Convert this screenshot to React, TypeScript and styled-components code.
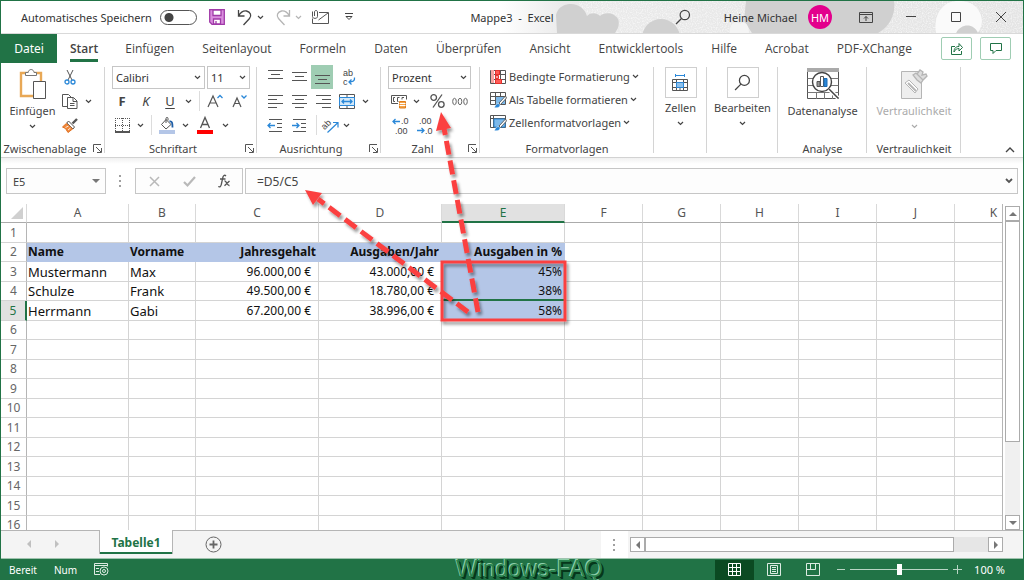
import React from "react";
import styled, { createGlobalStyle, css } from "styled-components";

const green = "#217346";
const line = "#d4d4d4";
const ink = "#444444";
const blue = "#2b88d8";
const uiFont = '"Noto Sans", "Open Sans", sans-serif';

const GlobalStyle = createGlobalStyle`
  * { box-sizing: border-box; }
  html, body, #root { height: 100%; }
  body { margin: 0; overflow: hidden; font-family: ${uiFont}; font-size: 11px; color: ${ink}; background: #fff; }
  button, input, select { font: inherit; color: inherit; }
  svg { display: block; flex: none; }
`;

const Window = styled.div`
  position: relative;
  display: flex;
  flex-direction: column;
  height: 100%;
  border: solid ${green};
  border-width: 1px 1px 0;
  background: #fff;
`;

/* ---------- title bar ---------- */

const TitleBar = styled.header`
  position: relative;
  display: grid;
  grid-template-columns: 1fr auto 1fr;
  align-items: center;
  height: 33px;
  border-bottom: 1px solid #d9d9d9;
  flex: none;
  color: #333;
`;
const Clouds = styled.svg`
  position: absolute;
  top: 0;
  right: 0;
`;
const TitleLeft = styled.div`
  display: flex;
  align-items: center;
  padding-left: 20px;
`;
const TitleRight = styled.div`
  position: relative;
  display: flex;
  align-items: center;
  justify-content: flex-end;
`;
const DocTitle = styled.h1`
  position: relative;
  margin: 0;
  font-size: 11px;
  font-weight: 400;
  white-space: pre;
`;
const SwitchLabel = styled.label`
  display: flex;
  align-items: center;
  gap: 8px;
  margin-right: 11px;
  white-space: nowrap;
`;
const Switch = styled.input`
  appearance: none;
  width: 37px;
  height: 15px;
  margin: 0;
  border: 1px solid #555;
  border-radius: 8px;
  background: radial-gradient(circle at 8px 50%, #444 4px, transparent 5px) #fff;
`;
const IconButton = styled.button<{ $w?: number; $h?: number; $on?: boolean; $gap?: number }>`
  display: flex;
  align-items: center;
  justify-content: center;
  width: ${(p) => p.$w ?? 24}px;
  height: ${(p) => p.$h ?? 24}px;
  margin: 0 0 0 ${(p) => p.$gap ?? 0}px;
  padding: 0;
  border: 0;
  background: ${(p) => (p.$on ? "#9fcdb3" : "transparent")};
  flex: none;
`;
const UserName = styled.span`
  margin: 0 11px 0 24px;
  white-space: nowrap;
`;
const Avatar = styled.span`
  display: flex;
  align-items: center;
  justify-content: center;
  width: 24px;
  height: 24px;
  margin-right: 11px;
  border-radius: 50%;
  background: #e3008c;
  color: #fff;
  font-size: 11px;
`;

/* ---------- ribbon tabs ---------- */

const TabBar = styled.nav`
  display: flex;
  align-items: center;
  height: 29px;
  padding-right: 12px;
  flex: none;
`;
const FileTab = styled.button`
  width: 56px;
  height: 29px;
  padding: 0;
  border: 0;
  background: ${green};
  color: #fff;
  font-size: 12px;
`;
const Tab = styled.button<{ $active?: boolean }>`
  height: 29px;
  padding: 0 ${(p) => (p.$active ? 13 : 14)}px;
  border: 0;
  background: ${(p) =>
    p.$active
      ? `linear-gradient(${green}, ${green}) center 25px / calc(100% - 26px) 3px no-repeat`
      : "transparent"};
  font-family: "Open Sans", "Noto Sans", sans-serif;
  font-size: 12px;
  font-weight: ${(p) => (p.$active ? 600 : 400)};
  white-space: nowrap;
`;
const Spacer = styled.span`
  flex: 1;
`;
const OutlineButton = styled.button`
  display: flex;
  align-items: center;
  justify-content: center;
  width: 31px;
  height: 23px;
  padding: 0;
  margin-left: 8px;
  border: 1px solid #9fcdb3;
  border-radius: 2px;
  background: #fff;
  flex: none;
`;

/* ---------- ribbon ---------- */

const Ribbon = styled.section`
  display: flex;
  height: 95px;
  padding: 2px 0 0;
  border-bottom: 1px solid #d2d2d2;
  flex: none;
`;
const Group = styled.div<{ $w: number }>`
  display: flex;
  flex-direction: column;
  width: ${(p) => p.$w}px;
  flex: none;
  background: linear-gradient(${line}, ${line}) right 2px / 1px 86px no-repeat;
`;
const GroupBody = styled.div<{ $pad?: number; $center?: boolean }>`
  display: flex;
  height: 75px;
  padding-left: ${(p) => p.$pad ?? 0}px;
  justify-content: ${(p) => (p.$center ? "center" : "flex-start")};
`;
const GroupFoot = styled.div<{ $launch?: boolean }>`
  display: grid;
  grid-template-columns: 1fr ${(p) => (p.$launch ? "16px" : "0")};
  align-items: center;
  height: 16px;
  text-align: center;
  white-space: nowrap;
`;
const Rows = styled.div`
  display: flex;
  flex-direction: column;
`;
const Row = styled.div<{ $gap?: number }>`
  display: flex;
  align-items: center;
  gap: ${(p) => p.$gap ?? 0}px;
  height: 24px;
`;
const Divider = styled.span`
  width: 1px;
  height: 20px;
  margin: 0 3px 0 5px;
  background: #dcdcdc;
`;
const BigButton = styled.button<{ $w: number }>`
  display: flex;
  flex-direction: column;
  align-items: center;
  width: ${(p) => p.$w}px;
  height: 74px;
  padding: 2px 0 0;
  border: 0;
  background: transparent;
  white-space: nowrap;
  &:disabled { color: #ababab; }
`;
const BigIcon = styled.span<{ $boxed?: boolean }>`
  display: flex;
  align-items: center;
  justify-content: center;
  width: 32px;
  height: ${(p) => (p.$boxed ? 31 : 34)}px;
  border: ${(p) => (p.$boxed ? "1px solid #cfcfcf" : "0")};
`;
const BigText = styled.span`
  height: 23px;
  line-height: 20px;
`;
const LineButton = styled.button`
  display: flex;
  align-items: center;
  gap: 2px;
  height: 23px;
  padding: 0;
  border: 0;
  background: transparent;
  white-space: nowrap;
`;
const Letter = styled.span<{ $kind: "b" | "i" | "u" }>`
  line-height: 16px;
  font-size: 13px;
  ${(p) => p.$kind === "b" && css`font-weight: 700;`}
  ${(p) => p.$kind === "i" && css`font-style: italic;`}
  ${(p) => p.$kind === "u" && css`text-decoration: underline; text-underline-offset: 2px;`}
`;
const SelectBox = styled.span<{ $w: number }>`
  display: grid;
  grid-template-columns: 1fr 10px;
  align-items: center;
  width: ${(p) => p.$w}px;
  height: 23px;
  border: 1px solid #c6c6c6;
  flex: none;
  background: #fff;
`;
const Select = styled.select`
  appearance: none;
  grid-area: 1 / 1 / 2 / 3;
  width: 100%;
  height: 21px;
  padding: 0 0 0 3px;
  border: 0;
  background: transparent;
  color: #333;
`;
const SelectMark = styled.span`
  grid-area: 1 / 2;
  pointer-events: none;
`;
const Collapse = styled.div`
  display: flex;
  flex: 1;
  align-items: flex-end;
  justify-content: flex-end;
`;

/* ---------- formula bar ---------- */

const FormulaBar = styled.div`
  display: flex;
  height: 46px;
  padding: 10px 5px 10px 5px;
  background: linear-gradient(#f0f0f0, #fff 6px);
  flex: none;
`;
const NameBox = styled.div`
  display: flex;
  align-items: center;
  width: 100px;
  height: 26px;
  border: 1px solid #c6c6c6;
  background: #fdfdfd;
`;
const BareInput = styled.input<{ $size?: number }>`
  flex: 1;
  min-width: 0;
  height: 24px;
  padding: 0 0 0 6px;
  border: 0;
  background: transparent;
  font-size: ${(p) => p.$size ?? 11}px;
`;
const Grip = styled.span`
  display: flex;
  align-items: center;
  justify-content: center;
  width: 29px;
`;
const FxBox = styled.div`
  display: flex;
  align-items: center;
  width: 108px;
  height: 26px;
  margin-right: 2px;
  border: 1px solid #c6c6c6;
  background: #fdfdfd;
`;
const FormulaBox = styled.div`
  display: flex;
  flex: 1;
  align-items: center;
  height: 26px;
  padding-left: 5px;
  border: 1px solid #c6c6c6;
  background: #fdfdfd;
`;

/* ---------- sheet ---------- */

const SheetArea = styled.main`
  display: flex;
  flex: 1;
  min-height: 0;
`;
const SheetClip = styled.div`
  flex: 1;
  min-width: 0;
  overflow: hidden;
  border-right: 1px solid #b5b5b5;
`;
const Sheet = styled.table`
  width: 100%;
  min-width: 1032px;
  border-collapse: separate;
  border-spacing: 0;
  table-layout: fixed;
  font-size: 13px;
  color: #111;
`;
const ColWidth = styled.col<{ $w?: number }>`
  width: ${(p) => (p.$w ? `${p.$w}px` : "auto")};
`;
const ColHead = styled.th<{ $on?: boolean }>`
  height: 19px;
  padding: 0;
  border-right: 1px solid #d9d9d9;
  border-bottom: ${(p) => (p.$on ? `2px solid ${green}` : "1px solid #ababab")};
  background: ${(p) => (p.$on ? "#e1e1e1" : "#fff")};
  color: ${(p) => (p.$on ? green : "#555")};
  font-size: 12px;
  font-weight: 400;
  line-height: 16px;
`;
const SheetRow = styled.tr`
  height: 19px;
  &:nth-child(odd) { height: 20px; }
`;
const RowHead = styled.th<{ $on?: boolean }>`
  padding: 0;
  border-right: ${(p) => (p.$on ? `2px solid ${green}` : "1px solid #b5b5b5")};
  border-bottom: 1px solid ${line};
  background: ${(p) => (p.$on ? "#e1e1e1" : "#fff")};
  color: ${(p) => (p.$on ? green : "#666")};
  font-size: 12px;
  font-weight: 400;
  line-height: 16px;
`;
const Cell = styled.td<{ $right?: boolean; $bold?: boolean; $fill?: boolean; $money?: boolean; $above?: boolean }>`
  padding: 0 ${(p) => (p.$money ? 7 : 2)}px 0 1px;
  border-right: 1px solid ${(p) => (p.$fill ? "#b4c6e7" : line)};
  border-bottom: ${(p) => (p.$above ? `2px solid ${green}` : `1px solid ${p.$fill ? "#b4c6e7" : line}`)};
  background: ${(p) => (p.$fill ? "#b4c6e7" : "#fff")};
  text-align: ${(p) => (p.$right ? "right" : "left")};
  font-size: ${(p) => (p.$right || p.$bold ? 12 : 13)}px;
  font-weight: ${(p) => (p.$bold ? 700 : 400)};
  line-height: 16px;
  white-space: nowrap;
`;
const VScroll = styled.div`
  display: flex;
  flex-direction: column;
  width: 20px;
  padding: 2px 3px 0 2px;
`;
const VTrack = styled.div`
  flex: 1;
  background: #f0f0f0;
`;
const VThumb = styled.div`
  height: 75%;
  border: 1px solid #ababab;
  background: #fff;
`;
const ScrollButton = styled.button`
  display: flex;
  align-items: center;
  justify-content: center;
  width: 15px;
  height: 15px;
  padding: 0;
  border: 1px solid #ababab;
  background: #fff;
  flex: none;
`;

/* ---------- sheet tabs ---------- */

const SheetTabs = styled.div`
  display: flex;
  height: 29px;
  border-top: 1px solid #b5b5b5;
  border-bottom: 1px solid #9fc3ae;
  background: #f4f4f4;
  flex: none;
`;
const TabArrows = styled.div`
  display: flex;
  align-items: center;
  width: 98px;
  height: 26px;
  padding-left: 16px;
  gap: 4px;
`;
const SheetTab = styled.button`
  width: 74px;
  height: 24px;
  margin-top: -1px;
  padding: 0;
  border: 1px solid #b5b5b5;
  border-width: 0 1px 0;
  box-shadow: inset 0 -2px ${green};
  background: #fff;
  color: ${green};
  font-size: 12px;
  font-weight: 700;
`;
const HGrip = styled.span`
  display: flex;
  align-items: center;
  justify-content: center;
  width: 27px;
  background: #fff;
`;
const HScroll = styled.div`
  display: flex;
  width: 373px;
  margin: 6px 20px 0 2px;
`;
const HTrack = styled.div`
  flex: 1;
  height: 15px;
  background: #e6e6e6;
`;
const HThumb = styled.div`
  width: 90%;
  height: 15px;
  border: 1px solid #ababab;
  background: #fff;
`;

/* ---------- status bar ---------- */

const StatusBar = styled.footer`
  position: relative;
  display: flex;
  align-items: center;
  height: 21px;
  padding: 0 18px 0 8px;
  background: ${green};
  color: #fff;
  font-size: 10px;
  flex: none;
`;
const StatusText = styled.span`
  margin-right: 17px;
  white-space: nowrap;
`;
const ViewButtons = styled.div`
  display: flex;
  margin-right: 4px;
`;
const ViewButton = styled.button<{ $on?: boolean }>`
  display: flex;
  align-items: center;
  justify-content: center;
  width: 39px;
  height: 20px;
  padding: 0;
  border: 0;
  background: ${(p) => (p.$on ? "#0b4a22" : "transparent")};
`;
const ZoomRange = styled.input`
  appearance: none;
  width: 98px;
  height: 12px;
  margin: 0 4px;
  background: linear-gradient(#b9d5c5, #b9d5c5) center / 100% 1px no-repeat;
  &::-webkit-slider-thumb {
    appearance: none;
    width: 5px;
    height: 11px;
    background: #fff;
  }
`;
const ZoomButton = styled.button`
  width: 10px;
  height: 16px;
  padding: 0;
  border: 0;
  background: transparent;
  display: flex;
  align-items: center;
  justify-content: center;
`;
const ZoomValue = styled.span`
  margin-left: 12px;
  font-size: 11px;
`;
const Watermark = styled.span`
  position: absolute;
  left: 455px;
  bottom: -2px;
  height: 26px;
  line-height: 26px;
  font-family: "Liberation Sans", sans-serif;
  font-size: 23px;
  color: #2a8350;
  text-shadow: -1px -1px #8fd0ab, 1px 1px #06371b, 2px 2px #06371b;
`;
const Annotations = styled.svg`
  position: absolute;
  top: -1px;
  left: -1px;
  pointer-events: none;
`;

/* ---------- icons ---------- */

type SvgProps = { w: number; h?: number; children: React.ReactNode; stroke?: string; sw?: number };
const Ico = ({ w, h = w, children, stroke = ink, sw = 1 }: SvgProps) => (
  <svg width={w} height={h} viewBox={`0 0 ${w} ${h}`} overflow="visible" fill="none" stroke={stroke} strokeWidth={sw} aria-hidden="true">
    {children}
  </svg>
);
const IconText = styled.text`
  font-family: "Liberation Sans", sans-serif;
  font-size: 9px;
  fill: ${ink};
  stroke: none;
`;
const Chevron = ({ c = ink }: { c?: string }) => (
  <Ico w={7} h={5} stroke={c} sw={1.2}>
    <path d="M1 1l2.500 2.500L6 1" />
  </Ico>
);
const DropButton = ({ label, c }: { label: string; c?: string }) => (
  <IconButton $w={12} aria-label={label}><Chevron c={c} /></IconButton>
);
const Launcher = ({ label }: { label: string }) => (
  <IconButton $w={16} $h={16} aria-label={label}>
    <Ico w={9} stroke="#555">
      <path d="M.5 8V.5H8M3 3l5 5M8.500 4v4.500H4" />
    </Ico>
  </IconButton>
);
const Lines = ({ x, y = 1, step = 4 }: { x: [number, number][]; y?: number; step?: number }) => (
  <Ico w={15} h={14} stroke="#555">
    {x.map(([a, b], i) => <path key={i} d={`M${a} ${y + i * step + 0.5}H${b}`} />)}
  </Ico>
);
const Arrowhead = ({ d, c = "#777" }: { d: "l" | "r" | "u" | "d"; c?: string }) => (
  <Ico w={8} stroke="none">
    <path fill={c} d={{ l: "M6 0v8L2 4z", r: "M2 0v8l4-4z", u: "M0 6h8L4 2z", d: "M0 2h8L4 6z" }[d]} />
  </Ico>
);
const GripDots = () => (
  <Ico w={3} h={12} stroke="none">
    <path fill="#a0a0a0" d="M0 0h2v2H0zM0 5h2v2H0zM0 10h2v2H0z" />
  </Ico>
);
const Magnifier = ({ size = 16 }: { size?: number }) => (
  <svg width={size} height={size} viewBox="0 0 16 16" fill="none" stroke="#444" strokeWidth="1.200" aria-hidden="true">
    <circle cx="9.800" cy="6" r="4.700" /><path d="M6.500 9.500L1 15" />
  </svg>
);
const Brush = () => (
  <g>
    <path d="M15.500 5L9 12l1.500 1.500L16.500 7z" fill="#fff" stroke="#555" strokeWidth=".9" />
    <path d="M4 16.500c1.500-.5 1.300-3.800 4-4 1.800.2 2.500 1.800 1.600 3-1.200 1.400-3.600 1.500-5.600 1z" fill={blue} stroke="#fff" strokeWidth=".5" />
  </g>
);

const SaveIcon = () => (
  <Ico w={16} stroke="#a03aa8" sw={1.3}>
    <path fill="#da8ede" d="M.7.700h14.600v14.600H3L.7 13z" />
    <path fill="#fff" d="M4 1h8v5.500H4zM4.500 10h7v5h-7z" />
    <path d="M7 12v3" />
  </Ico>
);
const UndoIcon = ({ c = "#444", flip = false }: { c?: string; flip?: boolean }) => (
  <Ico w={16} h={17} stroke={c} sw={1.3}>
    <g transform={flip ? "translate(16 0) scale(-1 1)" : undefined}>
      <path d="M1.500 1v6h6M1.500 7c2-3.500 4.500-5.500 8-5 4 .8 5.500 4.500 3 7.500L6.500 16" />
    </g>
  </Ico>
);
const MailIcon = () => (
  <Ico w={17} h={14} stroke="#555">
    <path d="M7 2.500h9.500v11H.500V8.500M6.500 10L16 3" />
    <path d="M.500 1.500v5c0 2.500 5 2.500 5 0V2c0-2-3-2-3 0v4" />
  </Ico>
);

const PasteIcon = () => (
  <Ico w={28} h={32}>
    <path d="M2 5h20v23H2z" fill="#fff" stroke="#e8a856" strokeWidth="2.400" />
    <path d="M6.500 7.500V4.500h2.700c.3-4 5.500-4 5.800 0h2.500v3z" fill="#fff" stroke="#777" />
    <path d="M14.500 13.500h12v17h-12z" fill="#fff" stroke="#555" />
  </Ico>
);
const CutIcon = () => (
  <Ico w={12} h={15}>
    <path d="M3 0l5 10M9 0L4 10" stroke="#555" />
    <circle cx="3" cy="12" r="2" stroke={blue} strokeWidth="1.300" /><circle cx="9" cy="12" r="2" stroke={blue} strokeWidth="1.300" />
  </Ico>
);
const CopyIcon = () => (
  <Ico w={16} h={15} stroke="#555">
    <path d="M5 12.500H.500V.500h6l2.500 2.500" /><path d="M5.500 3.500h6l3.500 3.500v7.500H5.500zM11 4v3.500h4M8 9.500h4.500M8 11.500h4.500" fill="#fff" />
  </Ico>
);
const PainterIcon = () => (
  <Ico w={16} h={15}>
    <path d="M15 1l-4.500 4.500" strokeWidth="2.400" stroke="#555" />
    <path d="M6.500 3l6 6L11 11 4.800 5z" fill="#fff" stroke="#555" />
    <path d="M4.300 5.500L.500 9l3 1.500 2.500 4 4.500-3.500z" fill="#f0883c" stroke="#e07020" />
    <path d="M3.500 9.500l3-1.500M6 12l2.500-2" stroke="#fff" strokeWidth=".8" />
  </Ico>
);
const BorderIcon = () => (
  <Ico w={15} h={15} stroke="#555">
    <path d="M.5 0v13M7.500 0v13M14.500 0v13M0 .5h15M0 7.500h15" strokeDasharray="1 1" /><path d="M0 14h15" strokeWidth="2" />
  </Ico>
);
const FillIcon = () => (
  <Ico w={16} h={17}>
    <path d="M7 2.500l5 5-5 4.500-4.500-4.500zM7 6V1.500c0-1.500 2-1.500 2 0v2" stroke="#555" /><path d="M10.500 4.500c2.500-.5 3 1 3 6" stroke="#1f5fa8" strokeWidth="1.800" />
    <path d="M0 13h16v4H0z" fill="#b4c6e7" stroke="none" />
  </Ico>
);
const FontColorIcon = () => (
  <Ico w={16} h={17}>
    <path d="M3.500 11L8 .500 12.500 11M5 7.500h6" stroke="#555" strokeWidth="1.300" /><path d="M0 13h16v4H0z" fill="#f00" stroke="none" />
  </Ico>
);
const GrowIcon = ({ down = false }: { down?: boolean }) => (
  <Ico w={16} h={15}>
    <path d={down ? "M2 13L6 4l4 9M3.500 9.500h5" : "M1 13L6 2l5 11M2.800 9h6.400"} stroke="#555" strokeWidth="1.200" />
    <path d={down ? "M10.500 1.500L13 4l2.500-2.500" : "M10.500 4L13 1.500 15.500 4"} stroke={blue} strokeWidth="1.300" />
  </Ico>
);
const WrapIcon = () => (
  <Ico w={13} h={17}>
    <IconText x="1" y="7">ab</IconText><IconText x="1" y="16">c</IconText>
    <path d="M12.500 8.500c.5 3.500-1.500 4.500-5.500 4.500M9.500 10.500L7 13l2.500 2.500" stroke={blue} strokeWidth="1.300" />
  </Ico>
);
const MergeIcon = () => (
  <Ico w={16} h={15} stroke="#555">
    <path d="M.5 .5h15v14H.5zM8 .5v3M8 11.500v3" /><path d="M.5 3.500h15v8H.5z" fill="#d3e8f8" stroke={blue} />
    <path d="M3 7.500h10M5 5.500l-2 2 2 2M11 5.500l2 2-2 2" stroke={blue} strokeWidth="1.300" />
  </Ico>
);
const IndentIcon = ({ right = false }: { right?: boolean }) => (
  <Ico w={15} h={13} stroke="#555">
    <path d="M1 .5h13M9 4.500h5M9 8.500h5M1 12.500h13" />
    <path d={right ? "M0 6.500h7M4.500 4l2.500 2.500L4.500 9" : "M0 6.500h7M2.500 4L0 6.500 2.500 9"} stroke={blue} strokeWidth="1.300" />
  </Ico>
);
const RotateIcon = () => (
  <Ico w={17} h={17}>
    <IconText x="0" y="11" transform="rotate(-45 4 9)">ab</IconText>
    <path d="M5.500 15.500L15.500 6M11 5.500h5v5" stroke={blue} strokeWidth="1.200" />
  </Ico>
);
const MoneyIcon = () => (
  <Ico w={17} h={15} stroke="#555">
    <path d="M7 9.500H.500V1.500h15v4M4 3.500H2.500v4H4M8.500 3.500H6.500v4h1M13 3.500h-2v2" />
    <path d="M8.500 7.500h6v6.500h-6z" fill="#f4a44c" stroke="#e07f1a" /><path d="M8.500 9.500h6M8.500 11.500h6" stroke="#fff" />
  </Ico>
);
const DecimalIcon = ({ less = false }: { less?: boolean }) => (
  <Ico w={17} h={17}>
    <IconText x={less ? 3 : 9} y="7">{less ? ".00" : ".0"}</IconText>
    <IconText x={less ? 9 : 3} y="17">{less ? ".0" : ".00"}</IconText>
    <path d={less ? "M1 13.500h7M5.500 11L8 13.500 5.500 16" : "M8 4.500H1M3.500 2L1 4.500 3.500 7"} stroke={blue} strokeWidth="1.300" />
  </Ico>
);
const CondIcon = () => (
  <Ico w={17} h={16} stroke="#555">
    <path d="M.5 1.500h15v13H.5zM5.500 1v14M10.500 1v14M0 5.500h16M0 10.500h16" />
    <path d="M1 1h3v13H1z" fill="#f6a5a3" stroke="none" /><path d="M5.500 1.500h4v4h-4zM5.500 10.500h6v4h-6z" fill="#ff5c57" stroke="#e8312c" /><path d="M5.500 6.500h3v3h-3z" fill="#f6a5a3" stroke="#e8312c" />
  </Ico>
);
const TableIcon = ({ plain = false }: { plain?: boolean }) => (
  <Ico w={17} h={17} stroke="#555">
    <path d={plain ? "M.5 1.500h15v12H.5zM3.500 1v13M0 4.500h16" : "M.5 1.500h15v12H.5zM5.500 1v13M10.500 1v13M0 5.500h16M0 9.500h16"} />
    <path d={plain ? "M4 5h11v8H4z" : "M6 6h9v7H6z"} fill="#7db9ea" stroke={plain ? blue : "none"} /><Brush />
  </Ico>
);
const CellsIcon = () => (
  <Ico w={17} h={18} stroke="#555">
    <path d="M.5 5.500h15v11H.500zM4.500 5v12M11.500 5v12M0 8.500h16M0 13.500h16M8 14v3" />
    <path d="M4.500 8.500h7v5h-7z" fill="#8ec1ec" stroke={blue} /><path d="M3.500 1.500h9M3.500 0v3M12.500 0v3" stroke={blue} />
  </Ico>
);
const AnalysisIcon = () => (
  <Ico w={32}>
    <path d="M.5 .5h31v30H.5z" fill="#fff" stroke="#555" /><path d="M0 0h32v4H0z" fill="#aaa" stroke="none" />
    <path d="M.5 10.500h31M.5 17.500h31M.5 24.500h31M9.500 24v7M17.500 24v7M25.500 24v7" stroke="#777" />
    <circle cx="15" cy="14" r="9.500" fill="#fff" stroke="#444" strokeWidth="1.400" />
    <path d="M22 21l9 9" stroke="#fff" strokeWidth="4" /><path d="M22 21l9 9" stroke="#444" strokeWidth="1.500" />
    <path d="M10 13.500h3v5h-3z" fill="#999" stroke="#555" /><path d="M13.500 8.500h3v10h-3z" fill="#fff" stroke="#555" /><path d="M17 10.500h3v8h-3z" fill={blue} stroke="#1b6bb5" />
  </Ico>
);
const SensitivityIcon = () => (
  <Ico w={28} h={32} stroke="#b5b5b5">
    <path d="M1.500 3.500h20v27h-20z" fill="#eee" />
    <path d="M5 15l4-3 9 9-3 4z" fill="#fff" /><path d="M8 15l8 8" strokeWidth="2" />
    <path d="M13 7l3-2 7 7-2 3-4-3zM17 6l3-4 3 2-1 3 4-1 1 2-4 4z" fill="#ddd" strokeWidth="1.300" />
  </Ico>
);

const TitleClouds = () => (
  <Clouds width="523" height="32" viewBox="500 0 523 32" aria-hidden="true">
    <defs>
      <linearGradient id="haze" x1="0" x2="1"><stop offset="0" stopColor="#fff" /><stop offset=".12" stopColor="#ebebeb" /><stop offset="1" stopColor="#e4e4e4" /></linearGradient>
      <filter id="grain"><feTurbulence type="fractalNoise" baseFrequency=".8" /><feColorMatrix values="0 0 0 0 1 0 0 0 0 1 0 0 0 0 1 0 0 0 3 -1.300" /></filter>
    </defs>
    <rect x="500" width="523" height="32" fill="url(#haze)" />
    <rect x="620" width="403" height="32" filter="url(#grain)" opacity=".6" />
    <g fill="#d0d0d0">
      <path d="M556 14c2-9 10-11 15-11 8 0 14 5 16 12 4-4 10-3 13 0 4-4 14-4 18 3 2 5 0 10-3 14h-58z" />
      <circle cx="661" cy="37" r="19" />
      <path d="M746 0h148c2 14-5 26-16 32H752l-8-12z" />
      <circle cx="968" cy="34" r="12" />
    </g>
    <path d="M730 32c-1-9 5-13 10-9 4-4 9 0 9 9z" fill="#f4f4f4" />
    <path d="M936 32c-2-14 2-24 12-30 12-5 28-1 32 10 4 9 1 15-2 20-4-10-17-10-22 0z" fill="#fafafa" />
  </Clouds>
);

/* ---------- data ---------- */

const tabs = ["Start", "Einfügen", "Seitenlayout", "Formeln", "Daten", "Überprüfen", "Ansicht", "Entwicklertools", "Hilfe", "Acrobat", "PDF-XChange"];
const columns: [string, number?][] = [["A", 102], ["B", 67], ["C", 123], ["D", 123], ["E", 123], ["F", 78], ["G", 78], ["H", 78], ["I", 78], ["J", 78], ["K"]];
const data: Record<number, string[]> = {
  2: ["Name", "Vorname", "Jahresgehalt", "Ausgaben/Jahr", "Ausgaben in %"],
  3: ["Mustermann", "Max", "96.000,00 €", "43.000,00 €", "45%"],
  4: ["Schulze", "Frank", "49.500,00 €", "18.780,00 €", "38%"],
  5: ["Herrmann", "Gabi", "67.200,00 €", "38.996,00 €", "58%"],
};
const rowNumbers = Array.from({ length: 16 }, (_, i) => i + 1);

const Picker = ({ w, label, value }: { w: number; label: string; value: string }) => (
  <SelectBox $w={w}>
    <Select aria-label={label} defaultValue={value}><option>{value}</option></Select>
    <SelectMark><Chevron /></SelectMark>
  </SelectBox>
);

export default function App() {
  return (
    <>
      <GlobalStyle />
      <Window>
        <TitleBar>
          <TitleClouds />
          <TitleLeft>
            <SwitchLabel>Automatisches Speichern<Switch type="checkbox" role="switch" /></SwitchLabel>
            <IconButton $w={18} aria-label="Speichern"><SaveIcon /></IconButton>
            <IconButton $w={20} $gap={9} aria-label="Rückgängig"><UndoIcon /></IconButton>
            <DropButton label="Rückgängig-Liste" />
            <IconButton $w={20} $gap={6} aria-label="Wiederholen"><UndoIcon c="#b5b5b5" flip /></IconButton>
            <DropButton label="Wiederholen-Liste" c="#b5b5b5" />
            <IconButton $w={32} aria-label="E-Mail"><MailIcon /></IconButton>
            <IconButton aria-label="Symbolleiste anpassen"><Ico w={8} h={8}><path d="M0 .5h8M1 3.500L4 6.500l3-3z" /></Ico></IconButton>
          </TitleLeft>
          <DocTitle>{"Mappe3  -  Excel"}</DocTitle>
          <TitleRight>
            <IconButton $w={34} aria-label="Suchen"><Magnifier /></IconButton>
            <UserName>Heine Michael</UserName>
            <Avatar>HM</Avatar>
            <IconButton $w={45} aria-label="Menüband-Anzeigeoptionen"><Ico w={14} h={11}><path d="M.5 .5h13v10H.5zM0 2.500h14M7 9V4.500M5 6.500l2-2 2 2" /></Ico></IconButton>
            <IconButton $w={45} aria-label="Minimieren"><Ico w={10} h={2}><path d="M0 .5h10" /></Ico></IconButton>
            <IconButton $w={45} aria-label="Maximieren"><Ico w={10}><path d="M.5 .5h9v9h-9z" /></Ico></IconButton>
            <IconButton $w={45} aria-label="Schließen"><Ico w={10}><path d="M0 0l10 10M10 0L0 10" /></Ico></IconButton>
          </TitleRight>
        </TitleBar>

        <TabBar>
          <FileTab>Datei</FileTab>
          {tabs.map((t, i) => <Tab key={t} $active={i === 0}>{t}</Tab>)}
          <Spacer />
          <OutlineButton aria-label="Freigeben"><Ico w={12} h={13} stroke={green}><path d="M4 4.500H.500v8h10V9M3 10c0-4 2-5.500 5-5.500V1.500l3.500 4L8 9V6.500C6 6.500 4 7.500 3 10z" /></Ico></OutlineButton>
          <OutlineButton aria-label="Kommentare"><Ico w={12} h={12} stroke={green}><path d="M.5 .5h11v7H6L3 10.500v-3H.500z" /></Ico></OutlineButton>
        </TabBar>

        <Ribbon>
          <Group $w={104}>
            <GroupBody $pad={6}>
              <BigButton $w={51}>
                <BigIcon><PasteIcon /></BigIcon>
                <BigText>Einfügen</BigText>
                <Chevron />
              </BigButton>
              <Rows>
                <Row><IconButton aria-label="Ausschneiden"><CutIcon /></IconButton></Row>
                <Row><IconButton aria-label="Kopieren"><CopyIcon /></IconButton><DropButton label="Kopieroptionen" /></Row>
                <Row><IconButton aria-label="Format übertragen"><PainterIcon /></IconButton></Row>
              </Rows>
            </GroupBody>
            <GroupFoot $launch>Zwischenablage<Launcher label="Zwischenablage öffnen" /></GroupFoot>
          </Group>

          <Group $w={152}>
            <GroupBody $pad={5}>
              <Rows>
                <Row $gap={2}><span /><Picker w={93} label="Schriftart" value="Calibri" /><Picker w={43} label="Schriftgrad" value="11" /></Row>
                <Row>
                  <IconButton aria-label="Fett"><Letter $kind="b">F</Letter></IconButton>
                  <IconButton aria-label="Kursiv"><Letter $kind="i">K</Letter></IconButton>
                  <IconButton aria-label="Unterstrichen"><Letter $kind="u">U</Letter></IconButton>
                  <DropButton label="Unterstreichungsart" />
                  <Divider />
                  <IconButton aria-label="Schriftgrad vergrößern"><GrowIcon /></IconButton>
                  <IconButton aria-label="Schriftgrad verkleinern"><GrowIcon down /></IconButton>
                </Row>
                <Row>
                  <IconButton aria-label="Rahmen"><BorderIcon /></IconButton>
                  <DropButton label="Rahmenarten" />
                  <Divider />
                  <IconButton aria-label="Füllfarbe"><FillIcon /></IconButton>
                  <DropButton label="Füllfarben" />
                  <IconButton $w={28} aria-label="Schriftfarbe"><FontColorIcon /></IconButton>
                  <DropButton label="Schriftfarben" />
                </Row>
              </Rows>
            </GroupBody>
            <GroupFoot $launch>Schriftart<Launcher label="Schriftart öffnen" /></GroupFoot>
          </Group>

          <Group $w={124}>
            <GroupBody $pad={6}>
              <Rows>
                <Row>
                  <IconButton aria-label="Oben ausrichten"><Lines y={0} x={[[0, 15], [3, 12], [0, 15]]} /></IconButton>
                  <IconButton aria-label="Zentriert ausrichten"><Lines y={2} x={[[0, 15], [3, 12], [0, 15]]} /></IconButton>
                  <IconButton $w={22} $on aria-label="Unten ausrichten"><Lines y={5} x={[[0, 15], [3, 12], [0, 15]]} /></IconButton>
                  <IconButton $w={30} aria-label="Textumbruch"><WrapIcon /></IconButton>
                </Row>
                <Row>
                  <IconButton aria-label="Linksbündig"><Lines x={[[0, 15], [0, 9], [0, 15], [0, 9]]} /></IconButton>
                  <IconButton aria-label="Zentriert"><Lines x={[[0, 15], [3, 12], [0, 15], [3, 12]]} /></IconButton>
                  <IconButton aria-label="Rechtsbündig"><Lines x={[[0, 15], [6, 15], [0, 15], [6, 15]]} /></IconButton>
                  <IconButton aria-label="Verbinden und zentrieren"><MergeIcon /></IconButton>
                  <DropButton label="Verbindungsarten" />
                </Row>
                <Row>
                  <IconButton aria-label="Einzug verkleinern"><IndentIcon /></IconButton>
                  <IconButton aria-label="Einzug vergrößern"><IndentIcon right /></IconButton>
                  <Divider />
                  <IconButton $w={20} aria-label="Ausrichtung"><RotateIcon /></IconButton>
                  <DropButton label="Drehungen" />
                </Row>
              </Rows>
            </GroupBody>
            <GroupFoot $launch>Ausrichtung<Launcher label="Ausrichtung öffnen" /></GroupFoot>
          </Group>

          <Group $w={99}>
            <GroupBody $pad={7}>
              <Rows>
                <Row><Picker w={83} label="Zahlenformat" value="Prozent" /></Row>
                <Row>
                  <IconButton $w={22} aria-label="Buchhaltungszahlenformat"><MoneyIcon /></IconButton>
                  <DropButton label="Währungen" />
                  <IconButton $w={30} aria-label="Prozentformat">
                    <Ico w={15} h={16} stroke="#555" sw={1.3}><circle cx="3.700" cy="4.500" r="2.800" /><circle cx="11.300" cy="11.500" r="2.800" /><path d="M12 1.500L3 14.500" /></Ico>
                  </IconButton>
                  <IconButton $w={16} aria-label="1.000er-Trennzeichen">
                    <Ico w={16} h={9} stroke="#666"><ellipse cx="2.500" cy="4.500" rx="1.800" ry="3.200" /><ellipse cx="8" cy="4.500" rx="1.800" ry="3.200" /><ellipse cx="13.500" cy="4.500" rx="1.800" ry="3.200" /></Ico>
                  </IconButton>
                </Row>
                <Row>
                  <IconButton aria-label="Dezimalstelle hinzufügen"><DecimalIcon /></IconButton>
                  <IconButton aria-label="Dezimalstelle löschen"><DecimalIcon less /></IconButton>
                </Row>
              </Rows>
            </GroupBody>
            <GroupFoot $launch>Zahl<Launcher label="Zahl öffnen" /></GroupFoot>
          </Group>

          <Group $w={174}>
            <GroupBody $pad={10}>
              <Rows>
                <LineButton><CondIcon />Bedingte Formatierung<Chevron /></LineButton>
                <LineButton><TableIcon />Als Tabelle formatieren<Chevron /></LineButton>
                <LineButton><TableIcon plain />Zellenformatvorlagen<Chevron /></LineButton>
              </Rows>
            </GroupBody>
            <GroupFoot>Formatvorlagen</GroupFoot>
          </Group>

          <Group $w={53}>
            <GroupBody $center>
              <BigButton $w={52}><BigIcon $boxed><CellsIcon /></BigIcon><BigText>Zellen</BigText><Chevron /></BigButton>
            </GroupBody>
          </Group>
          <Group $w={71}>
            <GroupBody $center>
              <BigButton $w={70}><BigIcon $boxed><Magnifier size={17} /></BigIcon><BigText>Bearbeiten</BigText><Chevron /></BigButton>
            </GroupBody>
          </Group>
          <Group $w={89}>
            <GroupBody $center>
              <BigButton $w={88}><BigIcon><AnalysisIcon /></BigIcon><BigText>Datenanalyse</BigText></BigButton>
            </GroupBody>
            <GroupFoot>Analyse</GroupFoot>
          </Group>
          <Group $w={94}>
            <GroupBody $center>
              <BigButton $w={93} disabled><BigIcon><SensitivityIcon /></BigIcon><BigText>Vertraulichkeit</BigText><Chevron c="#ababab" /></BigButton>
            </GroupBody>
            <GroupFoot>Vertraulichkeit</GroupFoot>
          </Group>
          <Collapse>
            <IconButton $w={26} $h={14} aria-label="Menüband reduzieren"><Ico w={10} h={6} sw={1.4}><path d="M1 5l4-4 4 4" /></Ico></IconButton>
          </Collapse>
        </Ribbon>

        <FormulaBar>
          <NameBox>
            <BareInput aria-label="Namenfeld" defaultValue="E5" />
            <IconButton $w={18} aria-label="Namen anzeigen"><Arrowhead d="d" /></IconButton>
          </NameBox>
          <Grip><GripDots /></Grip>
          <FxBox>
            <IconButton $w={36} aria-label="Abbrechen"><Ico w={11} stroke="#b9b9b9" sw={1.5}><path d="M1 1l9 9M10 1l-9 9" /></Ico></IconButton>
            <IconButton $w={34} aria-label="Eingeben"><Ico w={13} h={11} stroke="#b9b9b9" sw={2.2}><path d="M1 6l3.500 3.500L12 1" /></Ico></IconButton>
            <IconButton $w={36} aria-label="Funktion einfügen">
              <Ico w={14} h={14} sw={1.3} stroke="#555"><path d="M9 2C7.500.500 6.200 1.500 5.700 4L4.300 10.500C3.900 12.600 2.800 13.300 1.200 12.500M3 5h5.500M7.500 7c2.500-.5 2 5 5 4.500M12.500 7L7.500 11.800" /></Ico>
            </IconButton>
          </FxBox>
          <FormulaBox>
            <BareInput $size={12} aria-label="Bearbeitungsleiste" defaultValue="=D5/C5" />
            <IconButton $w={16} aria-label="Bearbeitungsleiste erweitern"><Ico w={8} h={6} sw={1.8} stroke="#555"><path d="M1 1l3 3 3-3" /></Ico></IconButton>
          </FormulaBox>
        </FormulaBar>

        <SheetArea>
          <SheetClip>
            <Sheet>
              <colgroup>
                <ColWidth $w={26} />
                {columns.map(([c, w]) => <ColWidth key={c} $w={w} />)}
              </colgroup>
              <thead>
                <tr>
                  <ColHead aria-label="Alles auswählen"><Ico w={23} h={14} stroke="none"><path d="M22 1v12H10z" fill="#d0d0d0" /></Ico></ColHead>
                  {columns.map(([c]) => <ColHead key={c} scope="col" $on={c === "E"}>{c}</ColHead>)}
                </tr>
              </thead>
              <tbody>
                {rowNumbers.map((n) => (
                  <SheetRow key={n}>
                    <RowHead scope="row" $on={n === 5}>{n}</RowHead>
                    {columns.map(([c], i) => (
                      <Cell
                        key={c}
                        $right={i > 1}
                        $bold={n === 2}
                        $money={n > 2 && (i === 2 || i === 3)}
                        $fill={(n === 2 && i < 5) || (n > 2 && n < 6 && i === 4)}
                        $above={n === 4 && i === 4}
                      >
                        {data[n]?.[i]}
                      </Cell>
                    ))}
                  </SheetRow>
                ))}
              </tbody>
            </Sheet>
          </SheetClip>
          <VScroll>
            <ScrollButton aria-label="Nach oben"><Arrowhead d="u" /></ScrollButton>
            <VTrack><VThumb /></VTrack>
            <ScrollButton aria-label="Nach unten"><Arrowhead d="d" /></ScrollButton>
          </VScroll>
        </SheetArea>

        <SheetTabs>
          <TabArrows>
            <IconButton aria-label="Vorheriges Blatt"><Arrowhead d="l" c="#c0c0c0" /></IconButton>
            <IconButton aria-label="Nächstes Blatt"><Arrowhead d="r" c="#c0c0c0" /></IconButton>
          </TabArrows>
          <SheetTab>Tabelle1</SheetTab>
          <IconButton $w={80} $h={26} aria-label="Neues Blatt"><Ico w={17} stroke="#666"><circle cx="8.500" cy="8.500" r="7.500" /><path d="M8.500 4.500v8M4.500 8.500h8" strokeWidth="1.800" /></Ico></IconButton>
          <Spacer />
          <HGrip><GripDots /></HGrip>
          <HScroll>
            <ScrollButton aria-label="Nach links"><Arrowhead d="l" /></ScrollButton>
            <HTrack><HThumb /></HTrack>
            <ScrollButton aria-label="Nach rechts"><Arrowhead d="r" /></ScrollButton>
          </HScroll>
        </SheetTabs>

        <StatusBar>
          <StatusText>Bereit</StatusText>
          <StatusText>Num</StatusText>
          <Ico w={15} h={13} stroke="#dcebe2"><path d="M6 11.500H.500V.500h13v3M0 2.500h14M2 5.500h3M2 8.500h3" /><circle cx="10" cy="8" r="4" /><circle cx="10" cy="8" r="1.500" /></Ico>
          <Spacer />
          <ViewButtons>
            <ViewButton $on aria-label="Normal"><Ico w={13} stroke="#fff"><path d="M.5 .5h12v12H.5zM4.500 0v13M8.500 0v13M0 4.500h13M0 8.500h13" /></Ico></ViewButton>
            <ViewButton aria-label="Seitenlayout"><Ico w={14} h={13} stroke="#dcebe2"><path d="M.5 .5h13v12H.5zM3.500 2.500h7v8h-7zM5 4.500h4M5 6.500h4M5 8.500h4" /></Ico></ViewButton>
            <ViewButton aria-label="Umbruchvorschau"><Ico w={14} h={13} stroke="#dcebe2"><path d="M.5 .5h13v12H.5zM4.500 .5v6M9.500 .5v6M.5 6.500h9" /></Ico></ViewButton>
          </ViewButtons>
          <ZoomButton aria-label="Verkleinern"><Ico w={8} h={1} stroke="#b9d5c5"><path d="M0 .5h8" /></Ico></ZoomButton>
          <ZoomRange type="range" aria-label="Zoom" min={0} max={200} defaultValue={100} />
          <ZoomButton aria-label="Vergrößern"><Ico w={9} stroke="#b9d5c5"><path d="M0 4.500h9M4.500 0v9" /></Ico></ZoomButton>
          <ZoomValue>100 %</ZoomValue>
          <Watermark>Windows-FAQ</Watermark>
        </StatusBar>

        <Annotations width="600" height="330" viewBox="0 0 600 330" fill="none" stroke="#fb4141" aria-hidden="true">
          <defs>
            <filter id="drop" x="-10%" y="-10%" width="120%" height="120%"><feDropShadow dx="2" dy="3" stdDeviation="1.500" floodColor="#000" floodOpacity=".4" /></filter>
          </defs>
          <g filter="url(#drop)">
            <rect x="442" y="262" width="123" height="58" strokeWidth="3" />
            <path d="M468 312L318 199" strokeWidth="5" strokeDasharray="14 6" />
            <path d="M478 312L444 128" strokeWidth="5" strokeDasharray="14 6" />
            <path d="M305 190l17 3-9 12z" fill="#fb4141" stroke="none" />
            <path d="M441 112l10 16-15 3z" fill="#fb4141" stroke="none" />
          </g>
        </Annotations>
      </Window>
    </>
  );
}
